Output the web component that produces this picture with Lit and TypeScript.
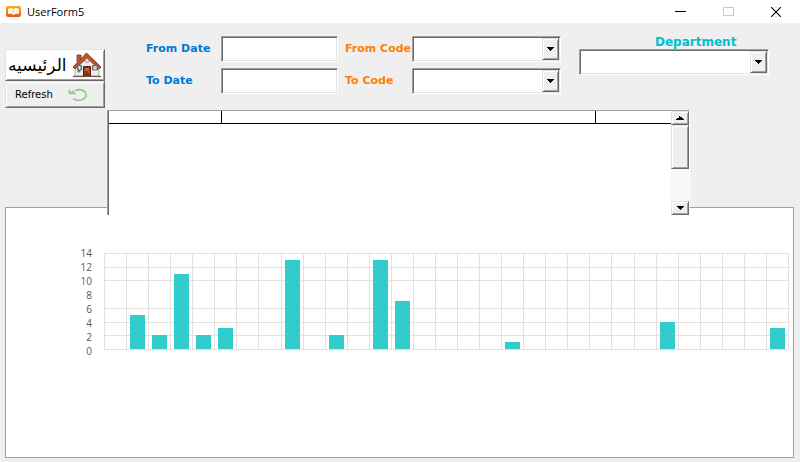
import { LitElement, html, css, svg } from "lit";
import { customElement } from "lit/decorators.js";

const arrowDown = svg`<path d="M0 0h7v1h-1v1h-1v1h-1v1h-1v-1h-1v-1h-1v-1h-1z" fill="#000"/>`;
const arrowUp = svg`<path d="M3 0h1v1h2v1h1v1h1v1h-8v-1h1v-1h2z" fill="#000"/>`;

const combo = (id: string) => html`
  <div class="combo">
    <select id=${id}><option></option></select>
    <span class="drop"><svg width="7" height="4" viewBox="0 0 7 4">${arrowDown}</svg></span>
  </div>
`;

@customElement("bar-chart")
class BarChart extends LitElement {
  static styles = css`
    :host { display: flex; gap: 12px; height: 96px; font: 10px/14px "Open Sans", sans-serif; color: #595959; }
    .axis { width: 18px; display: flex; flex-direction: column; justify-content: space-between; text-align: right; margin: -7px 0 -6px; }
    .plot { flex: 1; position: relative; display: flex; border-right: 1px solid #e2e2e2; }
    .line { position: absolute; left: 0; right: 0; height: 1px; background: #e2e2e2; }
    .slot { flex: 1; position: relative; display: flex; align-items: flex-end; justify-content: center; border-left: 1px solid #e2e2e2; }
    .bar { width: 15px; background: #33cccc; }
  `;

  private max = 14;
  private ticks = [14, 12, 10, 8, 6, 4, 2, 0];
  private values = [0, 5, 2, 11, 2, 3, 0, 0, 13, 0, 2, 0, 13, 7, 0, 0, 0, 0, 1, 0, 0, 0, 0, 0, 0, 4, 0, 0, 0, 0, 3];

  render() {
    return html`
      <div class="axis">${this.ticks.map((t) => html`<span>${t}</span>`)}</div>
      <div class="plot">
        ${this.ticks.filter((t) => t !== 8).map(
          (t) => html`<div class="line" style="top:${((this.max - t) / this.max) * 100}%"></div>`
        )}
        ${this.values.map(
          (v) => html`<div class="slot"><div class="bar" style="height:${(v / this.max) * 100}%"></div></div>`
        )}
      </div>
    `;
  }
}

@customElement("app-root")
class AppRoot extends LitElement {
  static styles = css`
    :host { display: flex; flex-direction: column; min-height: 100vh; box-sizing: border-box; background: #efefef; font-family: "DejaVu Sans", sans-serif; color: #000; }
    * { box-sizing: border-box; }
    svg { display: block; flex: none; }
    .title { display: flex; align-items: center; height: 23px; padding-left: 6px; background: #fff; font: 11px/16px "Open Sans", sans-serif; }
    .title h1 { margin: 0 auto 0 6px; font: inherit; }
    .title button { width: 48px; height: 23px; padding: 0; border: 0; background: none; display: flex; align-items: center; justify-content: center; }
    .tools { display: grid; grid-template-columns: 100px 116px 117fr 74px 149fr 208fr; align-items: start; height: 87px; padding: 13px 31px 0 5px; }
    .nav { display: flex; flex-direction: column; padding-top: 13px; }
    .nav button {
      display: flex; align-items: center; width: 100px; border: 1px solid; border-color: #e3e3e3 #696969 #696969 #e3e3e3;
      box-shadow: inset 1px 1px #fff, inset -1px -1px #a0a0a0; padding: 0 2px; color: #000; background: #efefef; font: 10px/14px "DejaVu Sans", sans-serif;
    }
    .nav .home { height: 32px; background: #fff; justify-content: space-between; font-size: 17px; line-height: 20px; }
    .nav .refresh { height: 27px; padding: 0 16px 0 9px; justify-content: space-between; }
    .stack { display: grid; grid-template-rows: 26px 26px; row-gap: 6px; align-items: center; }
    .dates { padding-left: 41px; }
    .codes { padding-left: 7px; }
    label { font-size: 11px; line-height: 14px; font-weight: bold; white-space: nowrap; }
    .blue { color: #0078d7; }
    .orange { color: #ff8000; }
    .teal { color: #00bfcf; }
    .text, select {
      display: block; width: 100%; min-width: 0; height: 26px; margin: 0; padding: 0 4px; border: 1px solid;
      border-color: #a0a0a0 #fff #fff #a0a0a0; border-radius: 0; box-shadow: inset 1px 1px #696969, inset -1px -1px #e3e3e3;
      background: #fff; font: 11px "DejaVu Sans", sans-serif; outline: 0;
    }
    select { appearance: none; padding-right: 20px; }
    .combo { position: relative; }
    .drop {
      position: absolute; right: 2px; top: 2px; bottom: 2px; width: 17px;
      display: flex; align-items: center; justify-content: center; pointer-events: none;
      background: #efefef; border: 1px solid; border-color: #e3e3e3 #696969 #696969 #e3e3e3;
      box-shadow: inset 1px 1px #fff, inset -1px -1px #a0a0a0;
    }
    .dept { display: flex; flex-direction: column; padding-left: 18px; }
    .dept label { font-size: 12px; line-height: 13px; padding-left: 76px; }
    .list { position: relative; z-index: 1; display: flex; height: 105px; margin: 0 110px 0 107px; background: #fff; border-top: 1px solid #a0a0a0; border-left: 1px solid #a0a0a0; border-right: 1px solid #fff; box-shadow: inset 1px 0 #696969; padding-left: 1px; }
    table { flex: 1; table-layout: fixed; border-collapse: collapse; height: 12px; }
    th { height: 12px; padding: 0; border-bottom: 1px solid #000; border-right: 1px solid #000; }
    th:last-child { border-right: 0; }
    .c1 { width: 112px; }
    .c3 { width: 76px; }
    .scroll { width: 18px; display: flex; flex-direction: column; background: repeating-conic-gradient(#fff 0 25%, #efefef 0 50%) 0 0 / 2px 2px; }
    .scroll button, .thumb { padding: 0; border: 1px solid; border-color: #e3e3e3 #696969 #696969 #e3e3e3; box-shadow: inset 1px 1px #fff, inset -1px -1px #a0a0a0; background: #efefef; border-radius: 0; }
    .scroll button { height: 14px; display: flex; align-items: center; justify-content: center; }
    .thumb { height: 44px; margin-bottom: auto; }
    .panel { flex: 1; margin: -8px 6px 4px 5px; padding: 45px 4px 0 68px; background: #fff; border: 1px solid #a0a0a0; }
  `;

  render() {
    return html`
      <header class="title">
        <svg width="15" height="11" viewBox="0 0 15 11">
          <defs><linearGradient id="g" x1="0" y1="0" x2="0" y2="1"><stop offset="0" stop-color="#ffad20"/><stop offset="1" stop-color="#e9541a"/></linearGradient></defs>
          <rect width="15" height="11" rx="2" fill="url(#g)"/>
          <path d="M2 3Q5 1 7.5 3Q10 1 13 3V8Q10 7 7.5 9Q5 7 2 8Z" fill="#fff6df"/>
          <path d="M7.5 3v5" stroke="#f4c48b" stroke-width=".7"/>
        </svg>
        <h1>UserForm5</h1>
        <button aria-label="Minimize"><svg width="11" height="11"><path d="M0 5.5h11" stroke="#000"/></svg></button>
        <button aria-label="Maximize" disabled><svg width="11" height="9"><path d="M.5 .5h10v8h-10z" fill="none" stroke="#c8c8c8"/></svg></button>
        <button aria-label="Close"><svg width="10" height="10"><path d="M0 0l10 10M10 0L0 10" stroke="#000" stroke-width="1.1"/></svg></button>
      </header>
      <section class="tools">
        <nav class="nav">
          <button class="home"><span lang="ar" dir="rtl">الرئيسيه</span>
            <svg width="30" height="26" viewBox="0 0 30 26">
              <path d="M3 13L15 3L27 13V24H3Z" fill="#efecea" stroke="#8b8784" stroke-width=".7"/>
              <path d="M5 10V3H9V7" fill="#c9542c" stroke="#74321d" stroke-width=".8"/>
              <path d="M1 15L14.5 1L29 15L27 17L15 6L3 17Z" fill="#c65029" stroke="#74321d" stroke-width=".8"/>
              <circle cx="15" cy="8.500" r="2" fill="#e5eef0" stroke="#8e655b" stroke-width=".7"/>
              <path d="M11.5 24V14.500H18.5V24Z" fill="#8d341c" stroke="#542014"/>
              <path d="M13 16h4v3h-4z" fill="#bd6540"/><circle cx="17" cy="20" r=".6" fill="#f0c45e"/>
              <path d="M5.5 13.5h4v4.500h-4zM20.5 13.500h5v4.500h-5z" fill="#73cbe1" stroke="#a64d30"/>
              <path d="M7.5 14v4M23 14v4" stroke="#fff" stroke-width=".7"/>
              <circle cx="7" cy="19" r="1.500" fill="#43934a"/>
              <path d="M1 24.500h28" stroke="#74554b" stroke-width="1.200"/>
            </svg>
          </button>
          <button class="refresh"><span>Refresh</span>
            <svg width="20" height="14" viewBox="0 0 20 14">
              <path d="M7 2.500C12 .5 18 2 18 7C18 12 10 14 5 10.500" fill="none" stroke="#8ccd80" stroke-width="1.600"/>
              <path d="M1.500 1.500V5.500H8M2 5.500L6 3" fill="none" stroke="#8ccd80" stroke-width="1.600"/>
            </svg>
          </button>
        </nav>
        <div class="stack dates blue"><label for="from-date">From Date</label><label for="to-date">To Date</label></div>
        <div class="stack"><input class="text" id="from-date" type="text"><input class="text" id="to-date" type="text"></div>
        <div class="stack codes orange"><label for="from-code">From Code</label><label for="to-code">To Code</label></div>
        <div class="stack">${combo("from-code")}${combo("to-code")}</div>
        <div class="dept"><label class="teal" for="department">Department</label>${combo("department")}</div>
      </section>
      <section class="list">
        <table><thead><tr><th class="c1"></th><th></th><th class="c3"></th></tr></thead></table>
        <div class="scroll">
          <button aria-label="Scroll up"><svg width="8" height="4">${arrowUp}</svg></button>
          <div class="thumb"></div>
          <button aria-label="Scroll down"><svg width="7" height="4">${arrowDown}</svg></button>
        </div>
      </section>
      <section class="panel"><bar-chart></bar-chart></section>
    `;
  }
}
